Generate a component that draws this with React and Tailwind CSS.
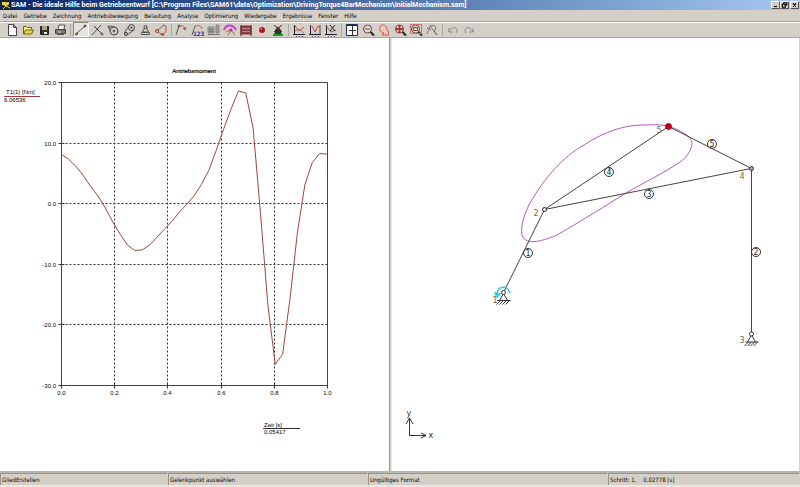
import React from 'react';

const menus = ['Datei', 'Getriebe', 'Zeichnung', 'Antriebsbewegung', 'Belastung', 'Analyse', 'Optimierung', 'Wiedergabe', 'Ergebnisse', 'Fenster', 'Hilfe'];

const curveAxes = (
  <>
    <path d="M3.5 2v10" stroke="#223" />
    <path d="M2 11.5h12" stroke="#223" />
    <path d="M5 13.5h9" stroke="#446" strokeDasharray="1 2" />
  </>
);
const lens = (
  <>
    <circle cx="7.5" cy="6" r="4" fill="#e2dcd8" stroke="#744" />
    <path d="M10.5 9l3.5 3.5" stroke="#222" strokeWidth="2" />
  </>
);

const toolGroups = [
  [
    { name: 'Neu', art: <path d="M4.5 1.5h5l3 3v8h-8zM9.5 1.5v3h3" fill="#fff" stroke="#444" /> },
    {
      name: 'Öffnen',
      art: (
        <>
          <path d="M3.5 11V3.5h3l1 1h4v2" fill="#ffef8a" stroke="#6d6408" />
          <path d="M3.5 11l2-4h8l-2 4z" fill="#e6d450" stroke="#6d6408" />
        </>
      ),
    },
    {
      name: 'Speichern',
      art: (
        <>
          <path d="M4.5 3.5h8v8h-8z" fill="#33331a" stroke="#222" />
          <path d="M6 3h5v4H6z" fill="#aaa78a" />
          <path d="M8 9h3v2H8z" fill="#eee" />
        </>
      ),
    },
    {
      name: 'Drucken',
      art: (
        <>
          <path d="M6 6l1-4h6l-1 4" fill="#eee" stroke="#555" />
          <path d="M3.5 6.5h10v4h-10z" fill="#777" stroke="#444" />
          <path d="M5 11h7" stroke="#555" strokeWidth="2" />
          <path d="M6 9h3" stroke="#ddc" />
        </>
      ),
    },
  ],
  [
    {
      name: 'Glied',
      active: true,
      art: (
        <>
          <path d="M3 11l9-8" stroke="#555" />
          <circle cx="3.5" cy="11" r="1" fill="#ddd" stroke="#333" />
          <circle cx="12" cy="3" r="1" fill="#ddd" stroke="#333" />
        </>
      ),
    },
    {
      name: 'Schubgelenk',
      art: (
        <>
          <path d="M3 12l9-10M8 6l5 5" stroke="#555" />
          <path d="M5 3l5 5" stroke="#333" />
          <circle cx="13" cy="11" r="1" stroke="#555" />
        </>
      ),
    },
    {
      name: 'Zahnrad',
      art: (
        <>
          <circle cx="9" cy="8" r="4" stroke="#444" />
          <circle cx="9" cy="8" r="1" stroke="#444" />
          <circle cx="4" cy="4" r="1" stroke="#444" />
          <path d="M5 3l5 1M4 5l2 5" stroke="#666" />
        </>
      ),
    },
    {
      name: 'Riemen',
      art: (
        <>
          <circle cx="10.5" cy="4.5" r="3" stroke="#444" />
          <circle cx="10.5" cy="4.5" r="1" fill="#333" />
          <circle cx="5" cy="11" r="1.5" stroke="#333" />
          <path d="M8 3l-5 7M13 7l-7 5" stroke="#555" />
        </>
      ),
    },
    {
      name: 'Gestell',
      art: (
        <>
          <circle cx="8.5" cy="4" r="1.5" stroke="#444" />
          <path d="M7.5 5l-2 4h6l-2-4M4.5 9.5h8v2h-8z" stroke="#555" />
        </>
      ),
    },
    {
      name: 'Winkel',
      art: (
        <>
          <path d="M11 2L4 8l5 4" stroke="#666" />
          <path d="M10 2l3 1v5l-3 4" stroke="#c44" />
          <circle cx="4" cy="8" r="1.5" fill="#d4d0c8" stroke="#a33" />
          <path d="M8 11l3 1" stroke="#c33" strokeWidth="2" />
        </>
      ),
    },
  ],
  [
    {
      name: 'Eingabebewegung',
      art: (
        <>
          <path d="M2 12L5 3" stroke="#555" />
          <path d="M5 3c4-1 6 1 6 4M9 5l2 2 1-3" stroke="#c44" />
          <circle cx="5" cy="3" r="1" stroke="#555" />
        </>
      ),
    },
    {
      name: 'Bewegungsdaten',
      art: (
        <>
          <path d="M2 12L5 3" stroke="#555" />
          <path d="M5 3c4-1 6 0 7 3" stroke="#c44" />
          <text x="3" y="13" fontSize="6" fontWeight="700" fill="#1c32a8" stroke="none">123</text>
        </>
      ),
    },
    {
      name: 'Kraft',
      art: (
        <>
          <path d="M2 4h6v6H2zM10 2h3v8h-3z" fill="#999" stroke="#888" />
          <path d="M2 11.5h12M3 6.5h4M3 8.5h4" stroke="#777" />
        </>
      ),
    },
    {
      name: 'Bahnkurve',
      art: (
        <>
          <path d="M2 7c2-6 9-6 12 0" stroke="#d23ad2" strokeWidth="2" />
          <path d="M6 12l3-5 4 5M4 9l6-3" stroke="#a64" />
          <circle cx="9" cy="7" r="1" fill="#d2c" stroke="#a2a" />
        </>
      ),
    },
    {
      name: 'Analyse',
      art: (
        <>
          <path d="M3 3h10v8H3z" fill="#b58484" stroke="#933" />
          <path d="M3 2v11M13 2v11" stroke="#5c1111" />
          <path d="M4 4h8M4 7h8M4 10h8" stroke="#5c1111" />
        </>
      ),
    },
    {
      name: 'Stopp',
      art: (
        <>
          <circle cx="8" cy="7" r="3" fill="#b5121c" />
          <circle cx="7" cy="6" r="1" fill="#f08080" />
        </>
      ),
    },
    {
      name: 'Animation',
      art: (
        <>
          <path d="M6 6h4l1 5H5z" fill="#333" stroke="#123c12" />
          <path d="M4 2l8 7M12 2L4 9" stroke="#333" />
          <circle cx="8" cy="5" r="1.5" fill="#922" />
          <path d="M3 12h10" stroke="#1c9a24" strokeWidth="2" />
        </>
      ),
    },
  ],
  [
    { name: 'Diagramm 1', art: <>{curveAxes}<path d="M4 3l4 5 5-4" stroke="#c44" /><path d="M4 8l4-2 5 4" stroke="#888" /></> },
    { name: 'Diagramm 2', art: <>{curveAxes}<path d="M5 3l3 6 3-6 2 2" stroke="#c44" /><path d="M13 2v9" stroke="#555" /></> },
    { name: 'Diagramm 3', art: <>{curveAxes}<path d="M4 4l4 5 5-2" stroke="#c44" /><path d="M7 2l5 6M12 2L7 8" stroke="#222" /></> },
  ],
  [
    {
      name: 'Fensteraufteilung',
      art: (
        <>
          <path d="M2.5 1.5h11v11h-11z" fill="#fff" stroke="#1e2c58" />
          <path d="M2 2.5h12" stroke="#1e2c58" />
          <path d="M8.5 3v9M5 7.5h7" stroke="#333" />
        </>
      ),
    },
    { name: 'Verkleinern', art: <>{lens}<path d="M5 6h5" stroke="#944" /></> },
    {
      name: 'Verschieben',
      art: <path d="M4 7c-2-6 6-7 7-1l1 2 1 4H6l2-2c-2 0-3-1-4-3z" fill="#e8c8c0" stroke="#c55" />,
    },
    { name: 'Alles zeigen', art: <>{lens}<path d="M7.5 2v8M3 6h9" stroke="#b33" strokeWidth="2" /></> },
    { name: 'Ausschnitt', art: <>{lens}<path d="M2.5 1.5h11v9h-11z" stroke="#c77" /><path d="M5.5 4.5h4v3h-4z" stroke="#844" /></> },
    { name: 'Vorherige Ansicht', art: <><path d="M3 11l3-8 4 5M6 3c5-2 8 2 4 5M3 5l4 2" stroke="#777" /><path d="M10 8l3 4" stroke="#444" /></> },
  ],
  [
    { name: 'Rückgängig', art: <path d="M4 5v4h4M4 9c2-5 8-6 8-1l-1 2" stroke="#888" /> },
    { name: 'Wiederholen', art: <path d="M12 5v4H8M12 9C10 4 4 3 4 8l1 2" stroke="#888" /> },
  ],
];

const torque = [
  8.1, 7.3, 6.1, 4.6, 2.8, 1.2, -0.8, -3.1, -5.1, -6.9, -7.8, -7.7, -6.9, -5.6, -4.3, -3, -1.5, -0.2, 1.2,
  3.1, 5.4, 8.7, 12.2, 15.5, 18.5, 18.2, 12.4, -1.7, -16.8, -26.6, -24.9, -15.7, -4.8, 3, 6.7, 8.2, 8.1,
];

const plot = { left: 61, top: 44, width: 266, height: 303 };
const xTicks = [0, 0.2, 0.4, 0.6, 0.8, 1];
const yTicks = [20, 10, 0, -10, -20, -30];
const px = (t) => Math.round(plot.left + t * plot.width) + 0.5;
const py = (v) => Math.round(plot.top + ((20 - v) / 50) * plot.height) + 0.5;

function ToolButton({ tool }) {
  return (
    <button
      type="button"
      aria-label={tool.name}
      className={
        tool.active
          ? 'flex h-[15px] w-4 items-center justify-center border border-t-[#8a877f] border-l-[#8a877f] border-r-white border-b-white bg-[#e6e4df]'
          : 'flex h-[15px] w-4 items-center justify-center'
      }
    >
      <svg viewBox="0 0 16 14" className="h-3.5 w-4 shrink-0" fill="none">
        {tool.art}
      </svg>
    </button>
  );
}

function TitleBar() {
  const controls = [
    { name: 'Minimieren', art: <path d="M2 6h4" /> },
    { name: 'Wiederherstellen', art: <path d="M3 3V1h4v3H5M1 3h4v4H1z" /> },
    { name: 'Schließen', art: <path d="M2 2l4 4M6 2L2 6" /> },
  ];
  return (
    <header className="flex h-2.5 shrink-0 items-center bg-linear-to-r from-[#0a246a] to-[#a6caf0] pr-px pl-px">
      <svg viewBox="0 0 10 10" className="h-2.5 w-2.5 shrink-0">
        <path d="M0 0h10v10H0z" fill="#222" />
        <path d="M1 2h4l3 3-3 1-4-1z" fill="#e8d83a" />
        <path d="M2 9l3-3 4 2" stroke="#e8d83a" fill="none" />
        <circle cx="7" cy="3" r="1" fill="#fff" />
      </svg>
      <h1 className="flex-1 truncate font-['Roboto',sans-serif] text-[7px] leading-[10px] font-bold text-white">
        SAM - Die ideale Hilfe beim Getriebeentwurf [C:\Program Files\SAM61\data\Optimization\DrivingTorque4BarMechanism\InitialMechanism.sam]
      </h1>
      {controls.map((c) => (
        <button
          key={c.name}
          type="button"
          aria-label={c.name}
          className="h-2 w-[9px] border border-t-white border-l-white border-r-[#555] border-b-[#555] bg-[#d4d0c8] last:ml-px"
        >
          <svg viewBox="0 0 8 8" className="h-full w-full" fill="none" stroke="#000" strokeWidth="1.5">
            {c.art}
          </svg>
        </button>
      ))}
    </header>
  );
}

function TorqueChart() {
  const points = torque.map((v, i) => `${plot.left + (i / 36) * plot.width},${plot.top + ((20 - v) / 50) * plot.height}`).join(' ');
  return (
    <svg viewBox="0 0 389 433" className="h-full w-full font-['Liberation_Sans',sans-serif]" fontSize="6" fill="#000">
      <text x="194" y="35" textAnchor="middle" stroke="#000" strokeWidth="0.2">Antriebsmoment</text>
      <g stroke="#333" fill="none">
        {xTicks.slice(1, -1).map((t) => (
          <path key={t} d={`M${px(t)} ${py(20)}V${py(-30)}`} strokeDasharray="2 2" />
        ))}
        {yTicks.slice(1, -1).map((v) => (
          <path key={v} d={`M${px(0)} ${py(v)}H${px(1)}`} strokeDasharray="2 2" />
        ))}
        {xTicks.map((t) => (
          <path key={t} d={`M${px(t)} ${py(-30) - 3}v6`} />
        ))}
        {yTicks.map((v) => (
          <path key={v} d={`M${px(0) - 3} ${py(v)}h6`} />
        ))}
        <path d={`M${px(0)} ${py(20)}H${px(1)}V${py(-30)}H${px(0)}z`} stroke="#444" />
      </g>
      <polyline points={points} fill="none" stroke="#a3453c" />
      {xTicks.map((t) => (
        <text key={t} x={px(t)} y="357" textAnchor="middle">{t.toFixed(1)}</text>
      ))}
      {yTicks.map((v) => (
        <text key={v} x="56" y={py(v) + 2} textAnchor="end">{v.toFixed(1)}</text>
      ))}
      <text x="6" y="56">T1(1) [Nm]</text>
      <path d="M4 58.5h36" stroke="#b0303c" />
      <text x="4" y="64">6.06536</text>
      <text x="264" y="389">Zeit [s]</text>
      <path d="M263 390.5h37" stroke="#333" />
      <text x="264" y="396">0.05417</text>
    </svg>
  );
}

const links = [
  { id: 1, x: 136, y: 215 },
  { id: 2, x: 364, y: 214 },
  { id: 3, x: 257, y: 156 },
  { id: 4, x: 217, y: 134 },
  { id: 5, x: 320, y: 106 },
];

const nodes = [
  { id: 1, x: 103, y: 265 },
  { id: 2, x: 144, y: 178 },
  { id: 3, x: 350, y: 305 },
  { id: 4, x: 350, y: 141 },
  { id: 5, x: 267, y: 95 },
];

function Support({ x, y }) {
  return (
    <g stroke="#333" fill="none">
      <path d={`M${x} ${y + 1}l-4 7M${x} ${y + 1}l4 7M${x - 6} ${y + 8}h13`} />
      <path d={`M${x - 3} ${y + 8}l-4 4M${x} ${y + 8}l-4 4M${x + 3} ${y + 8}l-4 4M${x + 6} ${y + 8}l-4 4`} />
      <circle cx={x} cy={y} r="2" fill="#fff" />
    </g>
  );
}

function Mechanism() {
  return (
    <svg viewBox="0 0 407 433" className="h-full w-full" fill="none" stroke="#444">
      <path
        d="M276 88C288 92 300 98 300 106C299 113 295 119 288 124C272 135 251 145 234 155C215 167 191 182 165 197C153 202 134 209 130 197C128 187 133 175 138 165C153 139 172 118 192 107C213 93 234 87 250 87C260 87 268 86 276 88Z"
        stroke="#b45cba"
      />
      <path d="M111.5 254.5L152.5 171.5L276.5 88.5L359.5 130.5V296M152.5 171.5L359 130.5" />
      <path d="M105 257c0-10 11-10 13-2M103 255l2 4 3-3z" stroke="#27cddd" strokeWidth="1.5" />
      <Support x={111.5} y={254.5} />
      <Support x={359.5} y={296} />
      <circle cx="152.5" cy="171.5" r="2" fill="#fff" stroke="#222" />
      <circle cx="359.5" cy="130.5" r="2" fill="#aaa" stroke="#333" />
      <circle cx="276.5" cy="88.5" r="3" fill="#c4001c" stroke="#a1061b" />
      {links.map((l) => (
        <g key={l.id}>
          <circle cx={l.x} cy={l.y} r="4.5" stroke="#333" />
          <text x={l.x} y={l.y + 3} fontSize="8" textAnchor="middle" fill="#222" stroke="none">{l.id}</text>
        </g>
      ))}
      {nodes.map((n) => (
        <text key={n.id} x={n.x} y={n.y} fontSize="9" textAnchor="middle" fill="#75683c" stroke="none">{n.id}</text>
      ))}
      <path d="M17.5 381V397.5H34M14 386l3.5-6 3.5 6M29 395l5 2.5-5 2.5" stroke="#333" />
      <text x="17" y="378" fontSize="9" textAnchor="middle" fill="#333" stroke="none">y</text>
      <text x="39" y="400" fontSize="9" textAnchor="middle" fill="#333" stroke="none">x</text>
    </svg>
  );
}

export default function App() {
  const status = ['GliedErstellen', 'Gelenkpunkt auswählen', 'Ungültiges Format', 'Schritt: 1,\u00a0\u00a0\u00a0 0.02778 [s]'];

  return (
    <div className="flex h-screen flex-col overflow-hidden bg-[#d4d0c8] font-['DejaVu_Sans_Condensed','Liberation_Sans',sans-serif] text-black">
      <TitleBar />

      <nav className="flex h-[11px] shrink-0 items-center gap-1.5 pl-[3px] text-[6px] leading-[11px]">
        {menus.map((m) => (
          <button key={m} type="button">{m}</button>
        ))}
      </nav>

      <div className="flex h-[17px] shrink-0 items-center border-t border-b border-t-[#aaa79f] border-b-[#aaa79f] pl-1 shadow-[inset_0_1px_0_#fff]">
        {toolGroups.map((group, i) => (
          <div key={i} className="flex items-center">
            {i > 0 && <span className="mx-0.5 h-3 w-px bg-[#aaa79f]" />}
            {group.map((tool) => (
              <ToolButton key={tool.name} tool={tool} />
            ))}
          </div>
        ))}
      </div>

      <main className="flex min-h-0 flex-1 pr-px">
        <section className="min-w-0 flex-[389] bg-white">
          <TorqueChart />
        </section>
        <div className="w-[3px] shrink-0 border-r border-l border-l-[#9b9993] border-r-[#e8e5de] bg-[#d4d0c8]" />
        <section className="min-w-0 flex-[407] bg-white">
          <Mechanism />
        </section>
      </main>

      <footer className="grid h-4 shrink-0 grid-cols-[21%_25%_30%_24%] border-t-2 border-b-2 border-t-[#b8b5ae] border-b-[#ebe8e1] text-[6px] leading-[11px]">
        {status.map((s) => (
          <div key={s} className="mr-px border-t border-l border-t-[#96938c] border-l-[#96938c] pl-px">{s}</div>
        ))}
      </footer>
    </div>
  );
}
